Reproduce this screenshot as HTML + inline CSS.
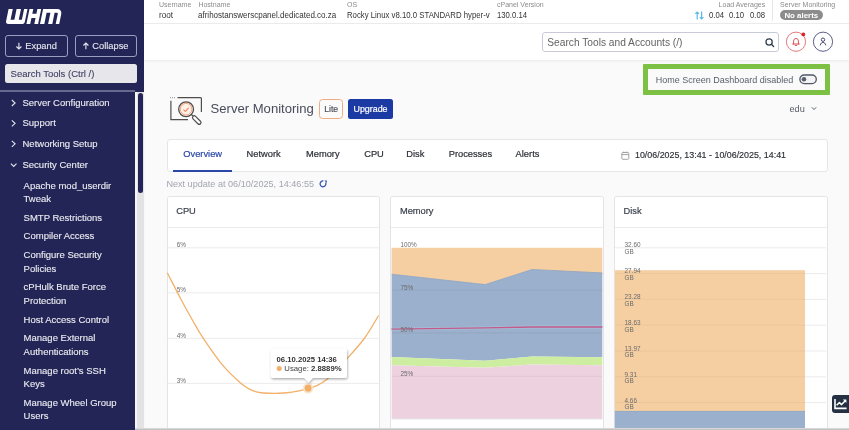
<!DOCTYPE html>
<html><head><meta charset="utf-8">
<style>
*{box-sizing:border-box;margin:0;padding:0}
html,body{width:849px;height:430px;overflow:hidden}
body{position:relative;will-change:transform;background:#fafafa;font-family:"Liberation Sans",sans-serif;color:#333}
.a{position:absolute;white-space:nowrap;line-height:1}
#sb{position:absolute;left:0;top:0;width:144px;height:430px;background:#222555}
.btn{position:absolute;top:35px;height:22px;border:1px solid #9c9dc0;border-radius:3px;color:#e8e8f0;font-size:9.3px;line-height:20px}
#nav{position:absolute;left:0;top:91.5px;width:135px;height:340px;background:#222555}
#track{position:absolute;left:135px;top:91.5px;width:9.5px;height:340px;background:linear-gradient(to right,#f6f6f8 0,#f6f6f8 2.3px,#e3e3e6 2.3px,#e3e3e6 8.7px,#f7f7f8 8.7px)}
#thumb{position:absolute;left:138px;top:93px;width:4.5px;height:99.5px;background:#222555;border-radius:3px}
.ni{position:absolute;left:22.5px;font-size:9.5px;line-height:13.5px;color:#ebebf2;white-space:nowrap;-webkit-text-stroke:0.12px #ebebf2}
.si{position:absolute;left:23.6px;font-size:9.5px;line-height:13.5px;color:#ebebf2;white-space:nowrap;-webkit-text-stroke:0.12px #ebebf2}
#hdr{position:absolute;left:144px;top:0;width:705px;height:60px;background:#fff;box-shadow:0 1px 3px rgba(0,0,0,.07)}
.lbl{position:absolute;top:0.8px;font-size:7px;line-height:1;color:#8c8c8c;white-space:nowrap}
.val{position:absolute;top:11.1px;font-size:8.8px;line-height:1;color:#333;white-space:nowrap;transform-origin:0 0}
.card{position:absolute;top:195.5px;height:240px;background:#fff;border:1px solid #e4e4e4;border-radius:2.5px;overflow:hidden}
.ch{position:absolute;left:0;top:0;width:100%;height:31.5px;border-bottom:1px solid #ebebeb}
.ct{position:absolute;left:8.6px;top:10.8px;font-size:9.3px;line-height:1;color:#3a3f4c;-webkit-text-stroke:0.2px #3a3f4c}
</style></head><body>

<!-- SIDEBAR -->
<div id="sb">
  <svg class="a" style="left:0;top:0" width="70" height="30" viewBox="0 0 70 30">
    <g transform="matrix(1,0,-0.206,1,4.944,0)" fill="#fff">
      <path d="M5.5 9H9.7V19.8H13.5V9H17.9V19.8H21V9H24.4V22Q24.4 24 22.4 24H8.5Q5.5 24 5.5 21Z"/>
      <path d="M26.4 9H30.2V13.8H34.3V9H38.1V24H34.3V18H30.2V24H26.4Z"/>
      <path d="M40 9H54.2A5 5 0 0 1 59.2 14V24H55.7V13.8Q55.7 12.8 54.7 12.8H52.3V24H48.1V12.8H44.3V24H40Z"/>
    </g>
  </svg>
  <div class="btn" style="left:5px;width:63px"><svg class="a" style="left:9px;top:5.6px" width="8" height="8" viewBox="0 0 8 8"><path d="M3.9 0.8V7M1.4 4.5l2.5 2.5 2.5-2.5" fill="none" stroke="#e8e8f0" stroke-width="1.1"/></svg><span class="a" style="left:19.3px;top:6px;font-size:9.3px;-webkit-text-stroke:0.1px #e8e8f0">Expand</span></div>
  <div class="btn" style="left:74.5px;width:62.5px"><svg class="a" style="left:6.8px;top:5.6px" width="8" height="8" viewBox="0 0 8 8"><path d="M3.9 7.2V1M1.4 3.5l2.5-2.5 2.5 2.5" fill="none" stroke="#e8e8f0" stroke-width="1.1"/></svg><span class="a" style="left:16.8px;top:6px;font-size:9.3px;-webkit-text-stroke:0.1px #e8e8f0">Collapse</span></div>
  <div class="a" style="left:5px;top:63.5px;width:132px;height:19.5px;background:#e6e6eb;border-radius:2.5px"></div>
  <div class="a" style="left:10.6px;top:68.5px;font-size:9.5px;color:#404164;-webkit-text-stroke:0.1px #404164">Search Tools (Ctrl /)</div>
  <div class="a" style="left:0;top:90.4px;width:135px;height:1.3px;background:#66688e"></div>
</div>
<div id="nav"></div>
<div id="track"></div>
<div id="thumb"></div>

<!-- nav items -->
<svg class="a" style="left:0;top:0" width="20" height="180">
  <g fill="none" stroke="#e6e6ee" stroke-width="1.1">
    <path d="M11.8 100l3.3 3-3.3 3"/>
    <path d="M11.8 120.3l3.3 3-3.3 3"/>
    <path d="M11.8 140.8l3.3 3-3.3 3"/>
    <path d="M10.9 163.6l2.8 2.8 2.8-2.8"/>
  </g>
</svg>
<div class="ni" style="top:96.1px">Server Configuration</div>
<div class="ni" style="top:116.4px">Support</div>
<div class="ni" style="top:137.2px">Networking Setup</div>
<div class="ni" style="top:157.9px">Security Center</div>

<div class="si" style="top:178.6px">Apache mod_userdir<br>Tweak</div>
<div class="si" style="top:210.9px">SMTP Restrictions</div>
<div class="si" style="top:229.3px">Compiler Access</div>
<div class="si" style="top:248px">Configure Security<br>Policies</div>
<div class="si" style="top:280.4px">cPHulk Brute Force<br>Protection</div>
<div class="si" style="top:312.6px">Host Access Control</div>
<div class="si" style="top:331.1px">Manage External<br>Authentications</div>
<div class="si" style="top:363.6px">Manage root’s SSH<br>Keys</div>
<div class="si" style="top:395.8px">Manage Wheel Group<br>Users</div>

<!-- HEADER -->
<div id="hdr">
  <div class="a" style="left:0;top:22.5px;width:705px;height:1px;background:#ebebeb"></div>
  <div class="lbl" style="left:15px">Username</div>
  <div class="val" style="left:15px;transform:scaleX(0.93)">root</div>
  <div class="lbl" style="left:54.4px">Hostname</div>
  <div class="val" style="left:54.4px;transform:scaleX(0.912)">afrihostanswerscpanel.dedicated.co.za</div>
  <div class="lbl" style="left:203px">OS</div>
  <div class="val" style="left:203px;transform:scaleX(0.885)">Rocky Linux v8.10.0 STANDARD hyper-v</div>
  <div class="lbl" style="left:353px">cPanel Version</div>
  <div class="val" style="left:353px;transform:scaleX(0.877)">130.0.14</div>
  <div class="lbl" style="left:574.6px">Load Averages</div>
  <svg class="a" style="left:551px;top:10.5px" width="9" height="9" viewBox="0 0 9 9">
    <g fill="none" stroke="#5bb8e6" stroke-width="1.2">
      <path d="M2.2 8.5V1M0.4 2.8l1.8-1.8 1.8 1.8"/>
      <path d="M6.6 0.5V8M4.8 6.2l1.8 1.8 1.8-1.8"/>
    </g>
  </svg>
  <div class="val" style="left:565px;transform:scaleX(0.875)">0.04</div>
  <div class="val" style="left:585px;transform:scaleX(0.875)">0.10</div>
  <div class="val" style="left:606px;transform:scaleX(0.875)">0.08</div>
  <div class="a" style="left:628px;top:0;width:1px;height:21px;background:#e6e6e6"></div>
  <div class="lbl" style="left:636px">Server Monitoring</div>
  <div class="a" style="left:635.6px;top:10px;width:43.2px;height:10.3px;border-radius:5.2px;background:#8c8c8c"></div>
  <div class="a" style="left:640.4px;top:11.9px;font-size:7.9px;font-weight:bold;color:#fff">No alerts</div>

  <!-- search -->
  <div class="a" style="left:398.4px;top:32.3px;width:236.2px;height:19.5px;border:1px solid #c9cad8;border-radius:3px;background:#fff"></div>
  <div class="a" style="left:403.3px;top:37.6px;font-size:10.2px;color:#636363">Search Tools and Accounts (/)</div>
  <svg class="a" style="left:620px;top:36.5px" width="11" height="11" viewBox="0 0 11 11">
    <circle cx="5.1" cy="5" r="3.1" fill="none" stroke="#2f3d4c" stroke-width="1.25"/>
    <path d="M7.4 7.3l2.2 2.2" stroke="#2f3d4c" stroke-width="1.3" stroke-linecap="round"/>
  </svg>
  <!-- bell -->
  <svg class="a" style="left:640px;top:30px" width="24" height="24" viewBox="0 0 24 24">
    <circle cx="12" cy="11.7" r="9.6" fill="#fff" stroke="#de6b6b" stroke-width="0.9"/>
    <path d="M9.6 14v-2.9c0-1.5 1-2.6 2.4-2.6s2.4 1.1 2.4 2.6v2.9M8.7 14h6.6M11.2 15.4h1.6" fill="none" stroke="#d9474c" stroke-width="0.95" stroke-linecap="round"/>
    <circle cx="19.3" cy="4.4" r="1.9" fill="#d9232e"/>
  </svg>
  <!-- user -->
  <svg class="a" style="left:667px;top:30px" width="24" height="24" viewBox="0 0 24 24">
    <circle cx="12" cy="11.7" r="9.6" fill="#fff" stroke="#4a4d7a" stroke-width="0.9"/>
    <circle cx="12" cy="9.7" r="1.7" fill="none" stroke="#3d4070" stroke-width="0.95"/>
    <path d="M9.3 15c.5-1.7 1.4-2.6 2.7-2.6s2.2.9 2.7 2.6" fill="none" stroke="#3d4070" stroke-width="0.95" stroke-linecap="round"/>
  </svg>
</div>

<!-- green box -->
<div class="a" style="left:643px;top:63.8px;width:187.4px;height:31px;border:5px solid #7cc143;background:#fafafa;border-radius:1px"></div>
<div class="a" style="left:655.8px;top:75.5px;font-size:9px;color:#5a606c">Home Screen Dashboard disabled</div>
<svg class="a" style="left:799.2px;top:74.4px" width="20" height="11" viewBox="0 0 20 11">
  <rect x="0.9" y="1" width="16.4" height="8.6" rx="4.3" fill="#f4f4f6" stroke="#535868" stroke-width="1.35"/>
  <circle cx="5" cy="5.3" r="2.3" fill="#5a5f70"/>
</svg>

<!-- edu -->
<div class="a" style="left:789.5px;top:104.5px;font-size:9.2px;color:#555b66">edu</div>
<svg class="a" style="left:810px;top:106px" width="8" height="5" viewBox="0 0 8 5"><path d="M1.8 1.3l2.2 2.2 2.2-2.2" fill="none" stroke="#555b66" stroke-width="1"/></svg>

<!-- title -->
<svg class="a" style="left:165px;top:92px" width="45" height="36" viewBox="0 0 45 36">
  <g fill="none" stroke="#4e4e4e" stroke-width="1.2">
    <path d="M12.5 5.7H35.5c.5 0 .9.4.9.9V20"/>
    <path d="M5.9 8.8V27.6H23"/>
  </g>
  <path d="M5 5.7h1M7 5.7h1M9 5.7h1" stroke="#777" stroke-width="0.8"/>
  <circle cx="21.1" cy="17.2" r="7.4" fill="#fef1ea" stroke="#4e4e4e" stroke-width="1.3"/>
  <circle cx="21.1" cy="17.2" r="5.8" fill="none" stroke="#f29a70" stroke-width="0.9"/>
  <path d="M18.4 17.5l1.9 1.9 3.4-3.6" fill="none" stroke="#f0875a" stroke-width="1.05"/>
  <path d="M26.4 22.5l1.6 1.6" stroke="#4e4e4e" stroke-width="1.3"/>
  <rect x="26.5" y="26.2" width="10.5" height="3.6" rx="1.8" transform="rotate(45 31.7 28)" fill="#fff" stroke="#4e4e4e" stroke-width="1.2"/>
</svg>
<div class="a" style="left:210.5px;top:102px;font-size:13.1px;color:#474d5b">Server Monitoring</div>
<div class="a" style="left:319px;top:99.2px;width:24.4px;height:19.5px;border:1px solid #f1ab80;border-radius:3.5px;background:#fbfbfb"></div>
<div class="a" style="left:324.2px;top:105px;font-size:8.7px;color:#474a55;-webkit-text-stroke:0.15px #474a55">Lite</div>
<div class="a" style="left:348.2px;top:99.2px;width:45px;height:19.5px;border-radius:2.5px;background:#1c3aa3"></div>
<div class="a" style="left:353.5px;top:105px;font-size:8.9px;color:#fff;-webkit-text-stroke:0.2px #fff">Upgrade</div>

<!-- tabs -->
<div class="a" style="left:166.6px;top:138.5px;width:661.3px;height:33px;background:#fff;border:1px solid #e6e6e6;border-radius:3px"></div>
<div class="a" style="left:183.3px;top:149.5px;font-size:9.3px;color:#2b47a8;-webkit-text-stroke:0.2px #2b47a8">Overview</div>
<div class="a" style="left:173.4px;top:169.5px;width:59px;height:2px;background:#2b47a8"></div>
<div class="a" style="left:246.6px;top:149.5px;font-size:9.3px;color:#2c2f36;-webkit-text-stroke:0.2px #2c2f36">Network</div>
<div class="a" style="left:306px;top:149.5px;font-size:9.3px;color:#2c2f36;-webkit-text-stroke:0.2px #2c2f36">Memory</div>
<div class="a" style="left:364.2px;top:149.5px;font-size:9.3px;color:#2c2f36;-webkit-text-stroke:0.2px #2c2f36">CPU</div>
<div class="a" style="left:406.3px;top:149.5px;font-size:9.3px;color:#2c2f36;-webkit-text-stroke:0.2px #2c2f36">Disk</div>
<div class="a" style="left:448.7px;top:149.5px;font-size:9.3px;color:#2c2f36;-webkit-text-stroke:0.2px #2c2f36">Processes</div>
<div class="a" style="left:515.6px;top:149.5px;font-size:9.3px;color:#2c2f36;-webkit-text-stroke:0.2px #2c2f36">Alerts</div>
<svg class="a" style="left:620.6px;top:150.8px" width="9" height="9" viewBox="0 0 9 9">
  <rect x="0.8" y="1.5" width="7" height="6.8" rx="1" fill="none" stroke="#9a9a9a" stroke-width="0.9"/>
  <path d="M0.8 3.6h7M2.8 0.5v1.6M5.8 0.5v1.6" stroke="#9a9a9a" stroke-width="0.9"/>
</svg>
<div class="a" style="left:635px;top:151.1px;font-size:8.9px;color:#2c2f36;-webkit-text-stroke:0.15px #2c2f36">10/06/2025, 13:41 - 10/06/2025, 14:41</div>

<div class="a" style="left:166.4px;top:179.6px;font-size:9.1px;color:#a2a6ae">Next update at 06/10/2025, 14:46:55</div>
<svg class="a" style="left:319.2px;top:178.5px" width="10" height="10" viewBox="0 0 10 10">
  <path d="M4.4 2A2.9 2.9 0 1 0 6.6 3.6" fill="none" stroke="#3352b3" stroke-width="1.25"/>
  <path d="M5.4 1.5H7.9V4z" fill="#3352b3"/>
</svg>

<!-- CPU card -->
<div class="card" style="left:166.6px;width:213.8px">
  <div class="ch"></div>
  <div class="ct">CPU</div>
</div>

<!-- Memory card -->
<div class="card" style="left:390.3px;width:213.3px">
  <div class="ch"></div>
  <div class="ct">Memory</div>
</div>

<!-- Disk card -->
<div class="card" style="left:613.9px;width:214.1px">
  <div class="ch"></div>
  <div class="ct">Disk</div>
</div>


<!-- CHARTS -->
<svg class="a" style="left:0;top:0" width="849" height="430" viewBox="0 0 849 430">
  <!-- CPU -->
  <g stroke="#ebebeb" stroke-width="1">
    <path d="M167.5 247.8H379.5M167.5 292.9H379.5M167.5 338.4H379.5M167.5 383.4H379.5"/>
  </g>
  <g font-family="Liberation Sans" font-size="6.4" fill="#6b6b6b">
    <text x="176.8" y="247">6%</text><text x="176.8" y="292.3">5%</text><text x="176.8" y="337.8">4%</text><text x="176.8" y="382.8">3%</text>
  </g>
  <path d="M167.3 272.8 C169.6 277.2 176.7 291.3 180.9 299.2 C185.1 307.1 188.7 313.5 192.4 320.0 C196.1 326.5 198.2 330.8 203.2 338.2 C208.2 345.6 215.9 357.1 222.2 364.6 C228.5 372.1 235.9 378.9 240.8 383.2 C245.8 387.5 248.2 388.7 251.9 390.3 C255.6 391.9 257.6 392.6 263.0 393.0 C268.4 393.4 276.2 393.8 284.0 393.0 C291.8 392.2 302.8 390.7 310.0 388.4 C317.2 386.1 321.2 383.9 327.4 379.0 C333.5 374.1 340.8 365.6 346.9 358.8 C353.0 352.1 359.0 345.7 364.3 338.5 C369.6 331.3 376.2 319.3 378.6 315.5" fill="none" stroke="#f2b068" stroke-width="1.3"/>
  <!-- Memory -->
  <path d="M391.6 247.7H602.3V274.2 L532.1 269.5 485.2 284.6 391.6 274.2z" fill="#f5cfa2"/>
  <path d="M391.6 274.2L485.2 284.6 532.1 269.5 602.3 272.9V357.2L532.1 356.4 485.2 360.7 391.6 357z" fill="#9bb0cc"/>
  <path d="M391.6 357L485.2 360.7 532.1 356.4 602.3 357.2V365.2L532.1 364.4 485.2 367.8 391.6 365.2z" fill="#cdeda1"/>
  <path d="M391.6 365.2L485.2 367.8 532.1 364.4 602.3 365.2V418.7H391.6z" fill="#eed1df"/>
  <path d="M391.6 274.2L485.2 284.6 532.1 269.5 602.3 272.9" fill="none" stroke="#8ea3bf" stroke-width="0.8"/>
  <path d="M391.6 329.1L485.2 327.8 532.1 327 602.3 327" fill="none" stroke="#a6bfd6" stroke-width="2.8"/><path d="M391.6 329.1L485.2 327.8 532.1 327 602.3 327" fill="none" stroke="#c25a8c" stroke-width="1.3"/>
  <g stroke="rgba(0,0,0,0.05)" stroke-width="1">
    <path d="M391.6 290.2H602.3M391.6 333H602.3M391.6 376.3H602.3"/>
  </g>
  <path d="M391.6 418.9H602.3" stroke="#d9d9d9" stroke-width="0.8"/>
  <g font-family="Liberation Sans" font-size="6.4" fill="#6b6b6b">
    <text x="400.4" y="246.8">100%</text><text x="400.4" y="289.6">75%</text><text x="400.4" y="332.3">50%</text><text x="400.4" y="375.6">25%</text>
  </g>
  <!-- Disk -->
  <g stroke="#ebebeb" stroke-width="1">
    <path d="M615 247.8H826M615 273.6H826M615 299.4H826M615 325.2H826M615 351H826M615 376.8H826M615 402.6H826"/>
  </g>
  <rect x="614.8" y="270.2" width="190.2" height="141" fill="#f5cfa2"/>
  <rect x="614.8" y="411.2" width="190.2" height="17" fill="#9bb0cc"/>
  <path d="M614.8 411.4H805" stroke="#8ea3bf" stroke-width="0.8"/>
  <g stroke="rgba(0,0,0,0.04)" stroke-width="1">
    <path d="M615 273.6H805M615 299.4H805M615 325.2H805M615 351H805M615 376.8H805M615 402.6H805"/>
  </g>
  <g font-family="Liberation Sans" font-size="6.4" fill="#6b6b6b">
    <text x="624.5" y="247.3">32.60</text><text x="624.5" y="253.8">GB</text>
    <text x="624.5" y="273.2">27.94</text><text x="624.5" y="279.7">GB</text>
    <text x="624.5" y="299.1">23.28</text><text x="624.5" y="305.6">GB</text>
    <text x="624.5" y="325.0">18.63</text><text x="624.5" y="331.5">GB</text>
    <text x="624.5" y="350.9">13.97</text><text x="624.5" y="357.4">GB</text>
    <text x="624.5" y="376.8">9.31</text><text x="624.5" y="383.3">GB</text>
    <text x="624.5" y="402.7">4.66</text><text x="624.5" y="409.2">GB</text>
    </g>
</svg>

<!-- tooltip -->
<svg class="a" style="left:260px;top:340px" width="100" height="60" viewBox="260 340 100 60">
  <defs><filter id="sh" x="-20%" y="-30%" width="140%" height="170%"><feDropShadow dx="0.6" dy="1.4" stdDeviation="1.3" flood-color="#000" flood-opacity="0.33"/></filter></defs>
  <circle cx="308.1" cy="388.2" r="5.2" fill="#fbe3c8"/>
  <circle cx="308.1" cy="388.2" r="3.4" fill="#f0b069"/>
  <path d="M272.7 348.6H345a2 2 0 0 1 2 2V376a2 2 0 0 1-2 2H312.6L308.6 382.6 304.6 378H272.7a2 2 0 0 1-2-2V350.6a2 2 0 0 1 2-2z" fill="#fff" filter="url(#sh)"/>
  <text x="276.6" y="361.6" font-family="Liberation Sans" font-size="7.7" font-weight="bold" fill="#333">06.10.2025 14:36</text>
  <circle cx="279.2" cy="368.5" r="2.5" fill="#f0b069"/>
  <text x="284.3" y="371.3" font-family="Liberation Sans" font-size="7.75" fill="#444">Usage: <tspan font-weight="bold" fill="#333">2.8889%</tspan></text>
</svg>

<!-- chart icon -->
<div class="a" style="left:831.8px;top:394.9px;width:20px;height:17.8px;background:#253142;border-radius:3px"></div>
<svg class="a" style="left:832px;top:395px" width="17" height="18" viewBox="0 0 17 18">
  <path d="M3 4V13.4H14.6" fill="none" stroke="#fff" stroke-width="1.6"/>
  <path d="M4.6 10.2L7.4 7.6 9.6 9.6 13 6" fill="none" stroke="#fff" stroke-width="1.5" stroke-linejoin="round"/>
  <path d="M10.8 4.4H14.4V8z" fill="#fff"/>
</svg>
<!-- bottom line -->
<div class="a" style="left:135px;top:428.2px;width:714px;height:1.8px;background:linear-gradient(#e2e2e2,#b9b9b9)"></div>

</body></html>
